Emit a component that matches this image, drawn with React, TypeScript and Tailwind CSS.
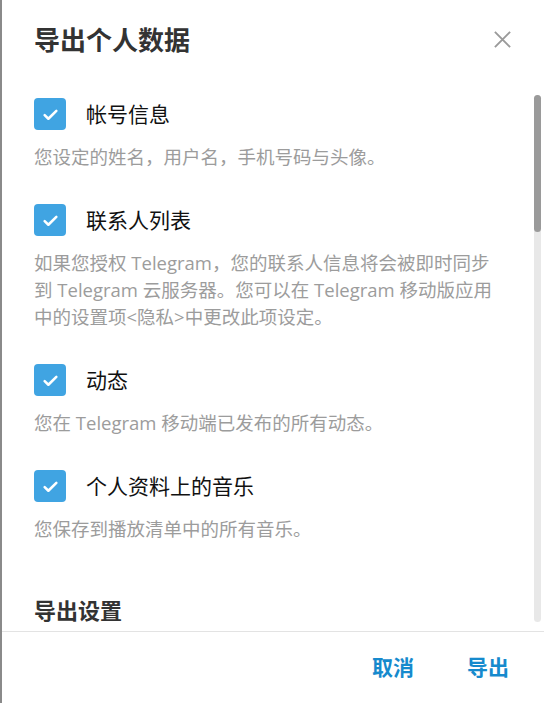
const ITEMS = [
  { label: "帐号信息", desc: "您设定的姓名，用户名，手机号码与头像。" },
  {
    label: "联系人列表",
    desc: "如果您授权 Telegram，您的联系人信息将会被即时同步到 Telegram 云服务器。您可以在 Telegram 移动版应用中的设置项<隐私>中更改此项设定。",
  },
  { label: "动态", desc: "您在 Telegram 移动端已发布的所有动态。" },
  { label: "个人资料上的音乐", desc: "您保存到播放清单中的所有音乐。" },
];

function Check() {
  return (
    <div className="flex h-8 w-8 shrink-0 items-center justify-center rounded-[4px] bg-[#40a4e2]">
      <svg width="17" height="17" viewBox="0 0 16 16" fill="none">
        <path d="M2.5 8.5l3.5 3.5 7.5-7.5" stroke="white" strokeWidth="2.4" strokeLinecap="round" strokeLinejoin="round" />
      </svg>
    </div>
  );
}

export default function App() {
  return (
    <div
      className="flex h-[703px] w-[544px] flex-col overflow-hidden border-l-2 border-[#8a8a8a] bg-white"
      style={{ fontFamily: '"Open Sans", "Noto Sans CJK SC", sans-serif' }}
    >
      <div className="flex h-[80px] shrink-0 items-start justify-between pl-[32px] pr-[32px] pt-[21px]">
        <h1 className="text-[26px] font-bold leading-[38px] text-[#333]">导出个人数据</h1>
        <button className="mt-[9px] text-[#9a9a9a]">
          <svg width="19" height="19" viewBox="0 0 20 20" fill="none">
            <path d="M2 2l16 16M18 2L2 18" stroke="currentColor" strokeWidth="2" />
          </svg>
        </button>
      </div>

      <div className="relative flex-1 overflow-hidden">
        <div className="pl-[32px] pr-[36px] pt-[18px]">
          {ITEMS.map((item) => (
            <div key={item.label} className="mb-[34px]">
              <div className="flex items-center gap-[20px]">
                <Check />
                <span className="text-[21px] leading-[32px] text-[#111]">{item.label}</span>
              </div>
              <p className="mt-[13px] max-w-[466px] text-[18.5px] leading-[27px] text-[#9c9c9c]">{item.desc}</p>
            </div>
          ))}
          <h2 className="mt-[53px] text-[22px] font-bold leading-[30px] text-[#333]">导出设置</h2>
        </div>

        <div className="absolute right-[3px] top-[15px] h-[527px] w-[7px] rounded-full bg-[#e8e8e8]">
          <div className="h-[137px] w-full rounded-full bg-[#9a9a9a]" />
        </div>
      </div>

      <div className="flex h-[72px] shrink-0 items-center justify-end gap-[53px] border-t border-[#e3e3e3] pr-[35px]">
        <button className="text-[21px] font-bold text-[#168acd]">取消</button>
        <button className="text-[21px] font-bold text-[#168acd]">导出</button>
      </div>
    </div>
  );
}
